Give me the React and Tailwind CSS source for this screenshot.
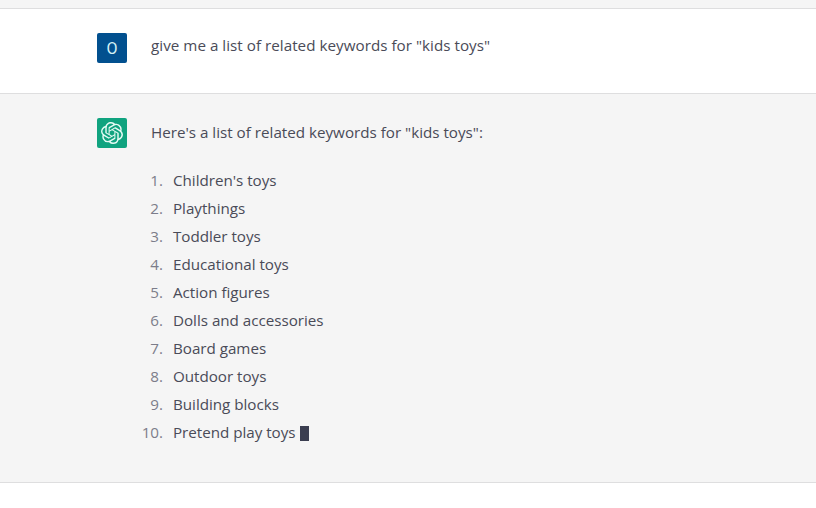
import { SiOpenai } from "react-icons/si";

const keywords = [
    "Children's toys",
    "Playthings",
    "Toddler toys",
    "Educational toys",
    "Action figures",
    "Dolls and accessories",
    "Board games",
    "Outdoor toys",
    "Building blocks",
    "Pretend play toys",
];

const Message = ({avatar, className, children}) => (
    <div className={`flex gap-6 border-b border-[#dededf] pl-[97px] ${className}`}>
        {avatar}
        <div className="flex-1">{children}</div>
    </div>
)

const App = () => {
    return (
        <div className="h-screen overflow-hidden bg-white font-['Open_Sans',sans-serif] text-[15.2px] leading-7 text-[#4a4b58]">
            <div className="h-[9px] border-b border-[#dededf] bg-[#f5f5f5]"/>
            <Message
                className="h-[85px] pt-6"
                avatar={
                    <div className="flex h-[30px] w-[30px] items-center justify-center rounded-xs bg-[#02508f] pt-0.5 font-['Roboto',sans-serif] text-base text-[#d5f3f5]">
                        O
                    </div>
                }
            >
                <p className="-mt-[2px] tracking-[0.03px]">give me a list of related keywords for "kids toys"</p>
            </Message>
            <Message
                className="h-[389px] bg-[#f5f5f5] pt-6"
                avatar={
                    <div className="flex h-[30px] w-[30px] items-center justify-center rounded-xs bg-[#10a37f] text-[#e6fbf5]">
                        <SiOpenai size={22}/>
                    </div>
                }
            >
                <p>Here's a list of related keywords for "kids toys":</p>
                <ol className="mt-5">
                    {keywords.map((keyword, i) => (
                        <li key={keyword} className="-ml-3 flex">
                            <span className="w-6 text-right text-[#7c7d8a]">{i + 1}.</span>
                            <span className="ml-[10px] tracking-[-0.02px]">{keyword}</span>
                            {i === keywords.length - 1 && (
                                <span className="mt-2 ml-1 h-[15px] w-[9px] bg-[#3b3e50]"/>
                            )}
                        </li>
                    ))}
                </ol>
            </Message>
        </div>
    )
}
export default App
